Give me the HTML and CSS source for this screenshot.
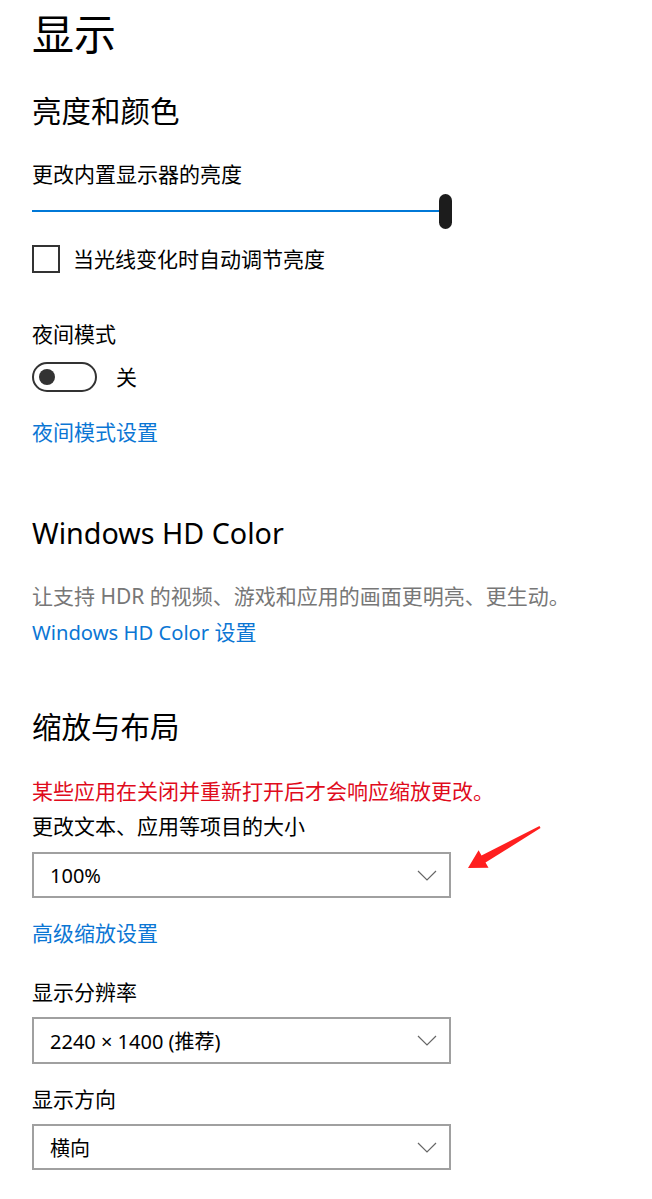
FILE: index.html
```html
<!DOCTYPE html>
<html lang="zh-CN">
<head>
<meta charset="utf-8"/>
<title>显示</title>
<link rel="stylesheet" href="styles.css">
</head>
<body>
<div id="page">
	<h1 class="title">显示</h1>

	<h2 class="group g-bright">亮度和颜色</h2>
	<div class="label l-bright">更改内置显示器的亮度</div>
	<div class="slider">
		<div class="track"></div>
		<div class="thumb"></div>
	</div>
	<div class="check">
		<span class="box"></span>
		<span class="check-text">当光线变化时自动调节亮度</span>
	</div>

	<div class="label l-night">夜间模式</div>
	<div class="toggle">
		<span class="switch"><span class="knob"></span></span>
		<span class="toggle-text">关</span>
	</div>
	<a class="link l-nightset" href="#">夜间模式设置</a>

	<h2 class="group g-hd">Windows HD Color</h2>
	<div class="desc">让支持 HDR 的视频、游戏和应用的画面更明亮、更生动。</div>
	<a class="link l-hdset" href="#"><span class="latin">Windows HD Color</span> 设置</a>

	<h2 class="group g-scale">缩放与布局</h2>
	<div class="warn">某些应用在关闭并重新打开后才会响应缩放更改。</div>
	<div class="label l-size">更改文本、应用等项目的大小</div>
	<div class="select s-size">
		<span>100%</span>
		<svg class="chev" width="20" height="11" viewBox="0 0 20 11"><polyline points="1,1 10,10 19,1" fill="none" stroke="#666" stroke-width="1.2"/></svg>
	</div>
	<a class="link l-adv" href="#">高级缩放设置</a>

	<div class="label l-res">显示分辨率</div>
	<div class="select s-res">
		<span>2240 × 1400 (推荐)</span>
		<svg class="chev" width="20" height="11" viewBox="0 0 20 11"><polyline points="1,1 10,10 19,1" fill="none" stroke="#666" stroke-width="1.2"/></svg>
	</div>

	<div class="label l-orient">显示方向</div>
	<div class="select s-orient">
		<span>横向</span>
		<svg class="chev" width="20" height="11" viewBox="0 0 20 11"><polyline points="1,1 10,10 19,1" fill="none" stroke="#666" stroke-width="1.2"/></svg>
	</div>

	<!-- 标注箭头 -->
	<svg class="arrow" width="85" height="53" viewBox="0 0 85 53">
		<polygon points="8,47 18.6,29.3 21.5,34.5 79.5,5 80.5,7 25.5,41.5 28.5,46.7" fill="#ff1f1f"/>
	</svg>
</div>
</body>
</html>
```

FILE: styles.css
```css
body{margin:0;background:#fff;color:#000;font-family:"Noto Sans","Noto Sans CJK SC",sans-serif;}
#page{position:relative;padding:0 0 30px 32px;min-height:1199px;box-sizing:border-box;}
a{text-decoration:none;}

.title{margin:9px 0 0;font-size:42px;line-height:49px;font-weight:normal;}
.group{margin:0;font-size:29.5px;line-height:36px;font-weight:normal;}
.label,.desc,.warn,.link,.check-text,.toggle-text{font-size:21px;line-height:28px;}
.label,.desc,.warn,.link{display:block;}
.link{color:#0b76d4;width:max-content;}
.link .latin{font-size:20.2px;}
.desc{color:#777;}
.warn{color:#e00b1c;}

.g-bright{margin-top:35px;}
.l-bright{margin-top:31px;}

.slider{position:relative;width:420px;height:36px;margin-top:5px;display:flex;align-items:center;}
.track{flex:1;height:2px;background:#0078d7;}
.thumb{width:13px;height:35px;border-radius:7px;background:#1c1c1c;}

.check{display:flex;align-items:center;gap:13px;margin-top:16px;height:28px;}
.box{width:24px;height:24px;border:2px solid #333;}

.l-night{margin-top:47px;}
.toggle{display:flex;align-items:center;gap:19px;margin-top:14px;height:30px;}
.switch{width:56px;height:26px;border:2px solid #333;border-radius:15px;display:flex;align-items:center;padding-left:5px;}
.knob{width:16px;height:16px;border-radius:50%;background:#333;}
.l-nightset{margin-top:26px;}

.g-hd{margin-top:69px;font-size:28.7px;}
.desc{margin-top:31px;}
.l-hdset{margin-top:8px;}

.g-scale{margin-top:63px;}
.warn{margin-top:32px;}
.l-size{margin-top:7px;}
.select{width:419px;height:46px;box-sizing:border-box;border:2px solid #a0a0a0;display:flex;align-items:center;justify-content:space-between;padding:0 12px 0 16px;font-size:20px;}
.s-size{margin-top:12px;}
.l-adv{margin-top:21px;}
.l-res{margin-top:31px;}
.s-res{margin-top:11px;height:47px;}
.l-orient{margin-top:21px;}
.s-orient{margin-top:11px;}

.arrow{position:absolute;left:460px;top:812px;}
```
